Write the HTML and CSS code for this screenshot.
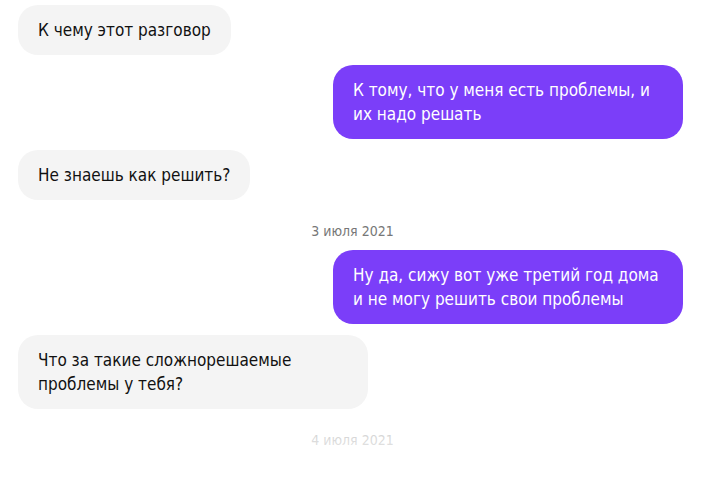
FILE: index.html
```html
<!DOCTYPE html>
<html lang="ru">
<head>
<meta charset="utf-8">
<link rel="stylesheet" href="styles.css">
</head>
<body>
<div class="chat">
  <div class="msg in">К чему этот разговор</div>
  <div class="msg out">К тому, что у меня есть проблемы, и их надо решать</div>
  <div class="msg in">Не знаешь как решить?</div>
  <div class="date">3 июля 2021</div>
  <div class="msg out">Ну да, сижу вот уже третий год дома и не могу решить свои проблемы</div>
  <div class="msg in">Что за такие сложнорешаемые проблемы у тебя?</div>
  <div class="date">4 июля 2021</div>
  <div class="fade"></div>
</div>
</body>
</html>
```
FILE: styles.css
```css
html, body {
  margin: 0;
  padding: 0;
  background: #fff;
}
body {
  font-family: "DejaVu Sans Condensed", "DejaVu Sans", sans-serif;
  font-stretch: condensed;
  font-size: 17px;
  color: #111;
}
.chat {
  position: relative;
  height: 479px;
  overflow: hidden;
  display: flex;
  flex-direction: column;
  gap: 10px;
  padding: 5px 22px 0 18px;
  box-sizing: border-box;
}
.msg {
  max-width: 310px;
  padding: 13px 20px;
  line-height: 24px;
  border-radius: 20px;
}
.in {
  align-self: flex-start;
  background: #f4f4f4;
  color: #111;
}
.out + .in {
  margin-top: 1px;
}
.out {
  align-self: flex-end;
  background: #7b3ef9;
  color: #fff;
  width: 310px;
}
.date {
  align-self: center;
  padding-top: 13px;
  line-height: 17px;
  font-size: 14px;
  color: #777;
  margin-left: 4px;
}
.fade {
  position: absolute;
  left: 0;
  right: 0;
  bottom: 0;
  height: 66px;
  background: linear-gradient(to bottom, rgba(255,255,255,0.55), rgba(255,255,255,1));
}
```
